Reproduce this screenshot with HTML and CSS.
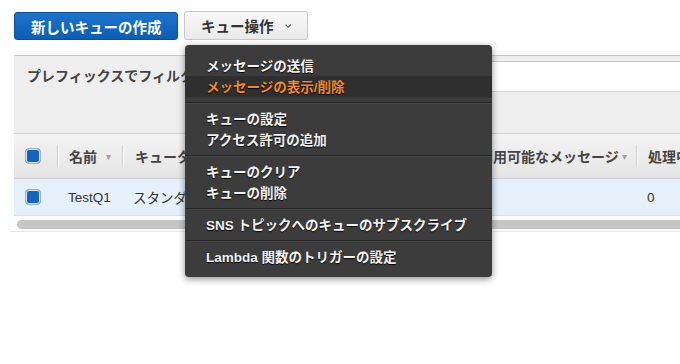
FILE: index.html
```html
<!DOCTYPE html>
<html lang="ja">
<head>
<meta charset="utf-8">
<title>SQS</title>
<link rel="stylesheet" href="styles.css">
</head>
<body>
<div class="actions">
  <button class="btn btn-primary">新しいキューの作成</button>
  <div class="dropdown">
    <button class="btn btn-secondary">キュー操作
      <svg class="chev" width="10" height="6" viewBox="0 0 10 6"><path d="M1 1 L5 5 L9 1" fill="none" stroke="#555" stroke-width="1.6"/></svg>
    </button>
    <div class="menu">
      <div class="menu-group">
        <div class="menu-item">メッセージの送信</div>
        <div class="menu-item active">メッセージの表示/削除</div>
      </div>
      <div class="menu-group">
        <div class="menu-item">キューの設定</div>
        <div class="menu-item">アクセス許可の追加</div>
      </div>
      <div class="menu-group">
        <div class="menu-item">キューのクリア</div>
        <div class="menu-item">キューの削除</div>
      </div>
      <div class="menu-group">
        <div class="menu-item">SNS トピックへのキューのサブスクライブ</div>
      </div>
      <div class="menu-group">
        <div class="menu-item">Lambda 関数のトリガーの設定</div>
      </div>
    </div>
  </div>
</div>

<div class="panel">
  <div class="filter">
    <span class="filter-label">プレフィックスでフィルタリング:</span>
    <div class="filter-input"></div>
  </div>
  <div class="grid head">
    <div class="cell"><span class="check"></span></div>
    <div class="cell th">名前<span class="sort wide">▾</span></div>
    <div class="cell th">キュータイプ<span class="sort">▾</span></div>
    <div class="cell th">利用可能なメッセージ<span class="sort">▾</span></div>
    <div class="cell th">処理中のメッセージ</div>
  </div>
  <div class="grid row">
    <div class="cell"><span class="check"></span></div>
    <div class="cell td">TestQ1</div>
    <div class="cell td">スタンダード</div>
    <div class="cell td"></div>
    <div class="cell td">0</div>
  </div>
  <div class="scroll"><div class="thumb"></div></div>
</div>
</body>
</html>
```

FILE: styles.css
```css
* { box-sizing: border-box; }
html, body { margin: 0; background: #fff; }
body {
  font-family: "Liberation Sans", "Noto Sans CJK JP", sans-serif;
  color: #333;
  width: 680px;
  height: 364px;
  overflow: hidden;
}

.actions {
  display: flex;
  align-items: flex-start;
  gap: 6px;
  padding: 11px 0 0 14px;
  height: 40px;
}

.btn {
  font-family: inherit;
  font-weight: bold;
  font-size: 14.5px;
  border-radius: 3px;
  padding: 0 16px;
  display: flex;
  align-items: center;
  white-space: nowrap;
  cursor: pointer;
}
.btn-primary {
  margin-top: 1px;
  height: 28px;
  color: #fff;
  background: linear-gradient(#1d74cb, #0b5eb2);
  border: 1px solid #0a4f99;
  width: 164px;
}
.btn-secondary {
  height: 29px;
  width: 124px;
  color: #333;
  background: linear-gradient(#f9f9f9, #e9e9e9);
  border: 1px solid #c8c8c8;
  gap: 11px;
}
.chev { margin-top: 1px; }

.dropdown { position: relative; }
.menu {
  position: absolute;
  top: 34px;
  left: 1px;
  width: 307px;
  z-index: 10;
  background: #3c3c3c;
  border-radius: 4px;
  padding: 5px 0;
  box-shadow: 0 2px 7px rgba(0,0,0,0.45);
}
.menu-group { padding: 5px 0; }
.menu-group + .menu-group {
  border-top: 1px solid #262626;
  box-shadow: inset 0 1px 0 #474747;
}
.menu-item {
  height: 21px;
  line-height: 19px;
  padding: 2px 0 0 21px;
  font-size: 13.5px;
  font-weight: bold;
  color: #f2f2f2;
  text-shadow: 0 1px 1px rgba(0,0,0,0.9);
  white-space: nowrap;
}
.menu-item.active {
  background: #2f2f2f;
  color: #f08a2c;
}

.panel {
  margin: 15px 0 0 14px;
  border-top: 1px solid #c9c9c9;
  width: 700px;
}
.filter {
  height: 78px;
  background: #eeeeee;
  border-bottom: 1px solid #d2d2d2;
  display: flex;
  align-items: flex-start;
  padding: 5px 0 0 13px;
}
.filter-label {
  height: 30px;
  line-height: 30px;
  font-size: 14px;
  font-weight: bold;
  color: #444;
  white-space: nowrap;
  width: 380px;
  overflow: hidden;
}
.filter-input {
  height: 31px;
  flex: 1;
  background: #fff;
  border-top: 1px solid #c8c8c8;
  border-bottom: 1px solid #d6d6d6;
  border-left: 1px solid #c8c8c8;
}

.grid {
  display: grid;
  grid-template-columns: 43px 65px 344px 170px 1fr;
}
.head {
  height: 45px;
  background: linear-gradient(#f4f4f4, #e4e4e4);
  border-bottom: 1px solid #cdcdcd;
}
.row {
  height: 37px;
  background: #e5f0fb;
  border-bottom: 1px solid #d9dee4;
}
.cell {
  display: flex;
  align-items: center;
  white-space: nowrap;
  overflow: hidden;
}
.cell:first-child { padding-left: 11px; }
.th {
  font-size: 14px;
  font-weight: bold;
  color: #444;
}
.th::before {
  content: "";
  width: 1px;
  height: 22px;
  background: #d0d0d0;
  box-shadow: 1px 0 0 #fafafa;
  margin-right: 11px;
  flex: none;
}
.head .cell:nth-child(3)::before,
.head .cell:nth-child(4)::before { margin-right: 12px; }
.sort {
  font-size: 10px;
  color: #a0a0a0;
  margin-left: 3px;
  font-weight: normal;
}
.sort.wide { margin-left: 9px; }
.td {
  font-size: 13.5px;
  color: #333;
  padding-left: 11px;
}
.row .cell:nth-child(3) { padding-left: 11px; }

.check {
  width: 16px;
  height: 16px;
  border-radius: 4px;
  background: #1463be;
  border: 1px solid #9fb1c6;
  box-shadow: inset 0 0 0 1px #dde6f0;
}

.scroll {
  padding: 4px 0 2px 7px;
  border-bottom: 1px solid #e6e6e6;
  margin-left: -4px;
}
.thumb {
  height: 9px;
  border-radius: 5px;
  background: #c6c6c6;
}
```
